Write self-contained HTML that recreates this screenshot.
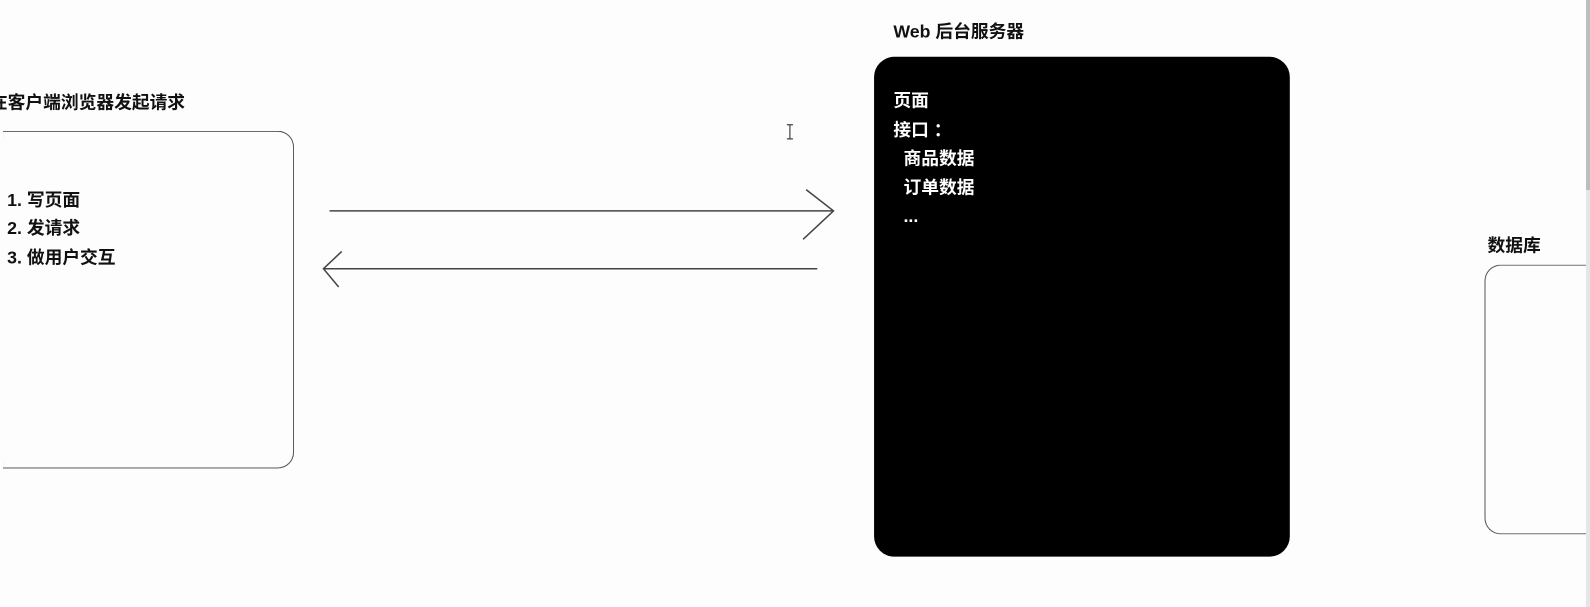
<!DOCTYPE html>
<html><head><meta charset="utf-8"><style>
html,body{margin:0;padding:0;width:1590px;height:607px;overflow:hidden;background:#fdfdfd;}
body{position:relative;font-family:"Liberation Sans","Microsoft YaHei","Noto Sans CJK SC",sans-serif;font-weight:bold;font-size:17.5px;color:#111;}
#wrap{position:absolute;left:0;top:0;width:1590px;height:607px;transform:scale(1.014);transform-origin:0 0;}
.t{position:absolute;white-space:nowrap;line-height:20px;}
.box{position:absolute;box-sizing:border-box;}
.w{color:#fff;}
</style></head><body>
<div id="wrap">
<div class="t" style="left:-10px;top:91px;">在客户端浏览器发起请求</div>
<div class="box" style="left:3px;top:129px;width:287px;height:333px;border:1.5px solid #555;border-left:none;border-radius:0 16px 16px 0;"></div>
<div class="t" style="left:7px;top:187px;">1. 写页面</div>
<div class="t" style="left:7px;top:215px;">2. 发请求</div>
<div class="t" style="left:7px;top:244px;">3. 做用户交互</div>

<svg style="position:absolute;left:0;top:0" width="1590" height="607">
<g stroke="#444" stroke-width="1.5" fill="none">
<line x1="325" y1="208" x2="822" y2="208"/>
<polyline points="795,187 822,208 792,236"/>
<line x1="806" y1="265" x2="319" y2="265"/>
<polyline points="337,248 319,265 334,283"/>
<path d="M776 123 H782 M779 123 V137 M776 137 H782" stroke-width="1.2"/>
</g>
</svg>

<div class="t" style="left:881px;top:21px;">Web 后台服务器</div>
<div class="box" style="left:862px;top:56px;width:410px;height:493px;background:#000;border-radius:20px;"></div>
<div class="t w" style="left:881px;top:89px;">页面</div>
<div class="t w" style="left:881px;top:118px;">接口 ：</div>
<div class="t w" style="left:891px;top:146px;">商品数据</div>
<div class="t w" style="left:891px;top:175px;">订单数据</div>
<div class="t w" style="left:891px;top:203px;">...</div>

<div class="t" style="left:1467px;top:232px;">数据库</div>
<div class="box" style="left:1464px;top:261px;width:140px;height:266px;border:1.5px solid #555;border-right:none;border-radius:16px 0 0 16px;"></div>
</div>
<div style="position:absolute;left:1586px;top:0;width:4px;height:607px;background:#e6e6e6;"></div>
<div style="position:absolute;left:1586px;top:0;width:4px;height:190px;background:#bdbdbd;"></div>
</body></html>
